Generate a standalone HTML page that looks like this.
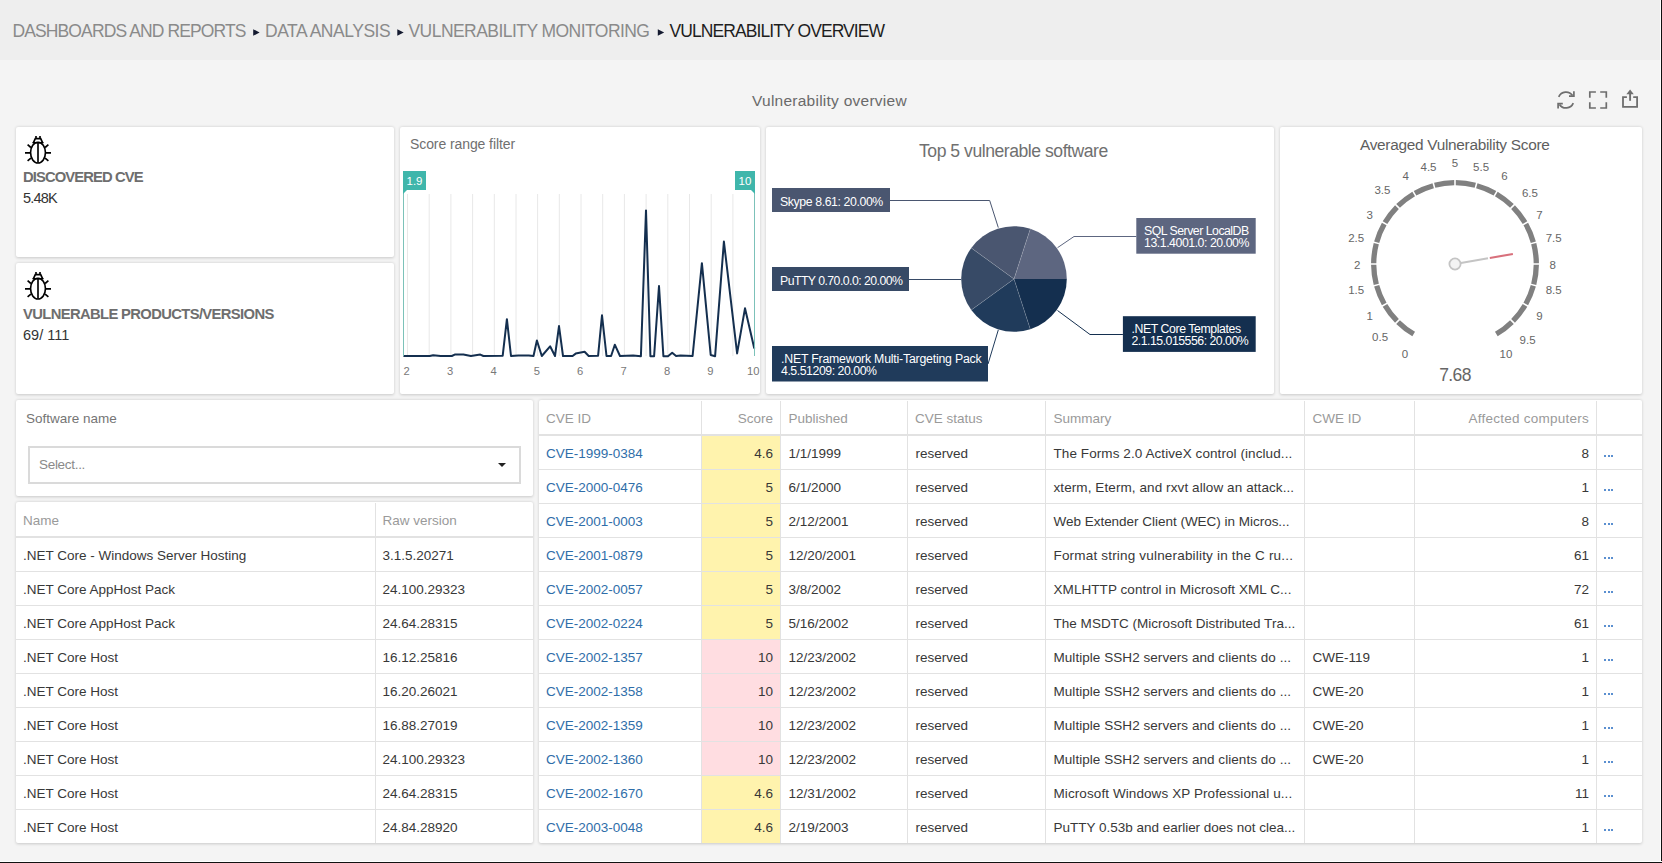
<!DOCTYPE html>
<html><head><meta charset="utf-8">
<style>
*{margin:0;padding:0;box-sizing:border-box}
html,body{width:1662px;height:863px;overflow:hidden}
body{background:#f4f4f4;font-family:"Liberation Sans",sans-serif;color:#333;position:relative}
.abs{position:absolute}
#crumb{left:0;top:0;width:1662px;height:60px;background:#eeeeee}
#crumb .t{position:absolute;top:20px;font-size:17.5px;color:#8a8a8a;white-space:nowrap;line-height:22px}
#crumb .arr{position:absolute;top:30px;width:0;height:0;border-left:5.5px solid #333;border-top:2.8px solid transparent;border-bottom:2.8px solid transparent}
.card{position:absolute;background:#fff;border-radius:2px;box-shadow:0 0.5px 3px rgba(0,0,0,0.18)}
.txt{position:absolute;white-space:nowrap}
#rborder{right:0;top:0;width:2px;height:863px;background:linear-gradient(to right,#fff 0,#fff 1px,#111 1px)}
#bborder{left:0;bottom:0;width:1662px;height:2px;background:linear-gradient(to bottom,#fff 0,#fff 1px,#111 1px)}
.cell{position:absolute;white-space:nowrap;font-size:13.5px;line-height:34px;color:#383838;margin-top:0.7px}
.cell.h{color:#9a9a9a;line-height:35px}
.cell.lk{color:#2f6ea9}
.dots{position:absolute;width:9px;height:2px;background:linear-gradient(to right,#5a8fd0 0,#5a8fd0 2px,transparent 2px,transparent 3.5px,#5a8fd0 3.5px,#5a8fd0 5.5px,transparent 5.5px,transparent 7px,#5a8fd0 7px,#5a8fd0 9px)}
</style></head><body>
<div id="crumb" class="abs">
  <span class="t" style="left:12.5px;letter-spacing:-0.886px">DASHBOARDS AND REPORTS</span>
  <span class="t" style="left:265px;letter-spacing:-0.47px">DATA ANALYSIS</span>
  <span class="t" style="left:408.5px;letter-spacing:-0.55px">VULNERABILITY MONITORING</span>
  <span class="t" style="left:669.5px;color:#1e1e1e;letter-spacing:-0.91px">VULNERABILITY OVERVIEW</span>

  <svg class="abs" style="left:0;top:0" width="900" height="60" viewBox="0 0 900 60"><path d="M253.2 29.2L259.6 32.5L253.2 35.8Z M397.3 29.2L403.7 32.5L397.3 35.8Z M657.8 29.2L664.2 32.5L657.8 35.8Z" fill="#141a30"/></svg>
</div>

<div class="txt" style="left:752px;top:91.5px;font-size:15.5px;color:#6a6a6a;letter-spacing:0.25px;line-height:18px">Vulnerability overview</div>

<!-- cards -->
<div class="card" style="left:16px;top:127px;width:378px;height:130px"></div>
<div class="card" style="left:16px;top:263px;width:378px;height:131px"></div>
<div class="card" style="left:400px;top:127px;width:360px;height:267px"></div>
<div class="card" style="left:766px;top:127px;width:508px;height:267px"></div>
<div class="card" style="left:1280px;top:127px;width:362px;height:267px"></div>
<div class="card" style="left:16px;top:400px;width:517px;height:96px"></div>
<div class="card" style="left:16px;top:502px;width:517px;height:341px"></div>
<div class="card" style="left:539px;top:400px;width:1103px;height:443px"></div>


<!-- card 1 content -->
<svg class="abs" style="left:0;top:0" width="1662" height="863" viewBox="0 0 1662 863">
  <g fill="none" stroke="#000" stroke-width="1.65">
      <ellipse cx="38" cy="152.6" rx="7.45" ry="10.4"/>
      <path d="M38 142.5V162.8"/>
      <path d="M32.6 142.7H43.4" stroke-width="1.5"/>
      <path d="M33.2 143.2L35.3 138.6H40.7L42.8 143.2"/>
      <path d="M36 135.9V139M40 135.9V139"/>
      <path d="M25 152.9H30M46 152.9H51M27.6 144.7L30.9 147.5M48.4 144.7L45.1 147.5M27.6 160.9L30.9 158.1M48.4 160.9L45.1 158.1"/>
    </g>
  <g transform="translate(0 136)" fill="none" stroke="#000" stroke-width="1.65">
      <ellipse cx="38" cy="152.6" rx="7.45" ry="10.4"/>
      <path d="M38 142.5V162.8"/>
      <path d="M32.6 142.7H43.4" stroke-width="1.5"/>
      <path d="M33.2 143.2L35.3 138.6H40.7L42.8 143.2"/>
      <path d="M36 135.9V139M40 135.9V139"/>
      <path d="M25 152.9H30M46 152.9H51M27.6 144.7L30.9 147.5M48.4 144.7L45.1 147.5M27.6 160.9L30.9 158.1M48.4 160.9L45.1 158.1"/>
    </g>
  </svg>
<div class="txt" style="left:23px;top:168.6px;font-size:14.8px;font-weight:bold;color:#6e6e6e;letter-spacing:-0.9px;line-height:16px">DISCOVERED CVE</div>
<div class="txt" style="left:23px;top:189.8px;font-size:14.5px;color:#333;letter-spacing:-0.8px;line-height:16px">5.48K</div>
<div class="txt" style="left:23px;top:305.9px;font-size:14.8px;font-weight:bold;color:#6e6e6e;letter-spacing:-0.65px;line-height:16px">VULNERABLE PRODUCTS/VERSIONS</div>
<div class="txt" style="left:23px;top:327px;font-size:14.5px;color:#333;letter-spacing:0px;line-height:16px">69/ 111</div>

<!-- score range filter -->
<div class="txt" style="left:410px;top:136px;font-size:14px;color:#707070;letter-spacing:-0.09px;line-height:16px">Score range filter</div>
<svg class="abs" style="left:0;top:0" width="1662" height="863" viewBox="0 0 1662 863">
  <path d="M407.5 194V356 M429.2 194V356 M450.9 194V356 M472.6 194V356 M494.3 194V356 M516.0 194V356 M537.6 194V356 M559.3 194V356 M581.0 194V356 M602.7 194V356 M624.4 194V356 M646.1 194V356 M667.8 194V356 M689.5 194V356 M711.2 194V356 M732.9 194V356" stroke="#e8e8e8" stroke-width="1" fill="none"/>
  <polyline points="403.4,356.0 429.7,356.0 433.2,355.2 440.7,356.0 451.8,356.0 454.7,354.6 463.4,354.6 470.9,356.0 480.3,354.6 483.4,356.0 502.7,355.7 506.9,319.2 511.0,356.0 518.3,355.5 528.8,355.5 533.5,356.0 536.9,340.5 541.8,356.0 550.1,346.3 555.0,356.0 559.0,326.1 563.0,356.0 572.6,356.0 575.7,353.6 584.6,351.7 588.7,356.0 598.1,355.7 602.0,315.3 606.5,356.0 611.1,356.0 614.8,344.7 620.0,356.0 633.2,355.5 640.9,356.2 646.0,210.4 650.4,356.2 654.1,356.2 659.0,286.1 663.4,356.2 668.0,356.2 672.2,352.8 676.1,356.0 680.5,355.5 692.6,356.0 701.9,263.2 710.7,355.0 715.1,356.2 723.9,241.6 737.1,353.4 745.0,308.3 754.3,348.4" fill="none" stroke="#142f4f" stroke-width="2" stroke-linejoin="round"/>
  <path d="M403.5 190V356M754.5 190V356" stroke="#7cc2b9" stroke-width="1"/>
  <path d="M403 171h23v19h-19l-4 4z" fill="#3fb6ab"/>
  <path d="M735 171h20v23l-4-4h-16z" fill="#3fb6ab"/>
  <g font-family="Liberation Sans" font-size="11.5" fill="#fff" text-anchor="middle">
    <text x="414.5" y="185">1.9</text>
    <text x="745" y="185">10</text>
  </g>
  <g font-family="Liberation Sans" font-size="11.2" fill="#787878" text-anchor="middle">
    <text x="406.7" y="375">2</text>
    <text x="450.1" y="375">3</text>
    <text x="493.5" y="375">4</text>
    <text x="536.8" y="375">5</text>
    <text x="580.2" y="375">6</text>
    <text x="623.6" y="375">7</text>
    <text x="667.0" y="375">8</text>
    <text x="710.4" y="375">9</text>
    <text x="753.2" y="375">10</text>
  </g>
</svg>

<!-- pie -->
<div class="txt" style="left:919px;top:141px;font-size:17.6px;color:#707070;letter-spacing:-0.47px;line-height:20px">Top 5 vulnerable software</div>
<svg class="abs" style="left:0;top:0" width="1662" height="863" viewBox="0 0 1662 863">
<path d="M1014.0 279.0L1066.80 279.00A52.8 52.8 0 0 1 1030.32 329.22Z" fill="#142f4f"/>
<path d="M1014.0 279.0L1030.32 329.22A52.8 52.8 0 0 1 971.28 310.04Z" fill="#203b5b"/>
<path d="M1014.0 279.0L971.28 310.04A52.8 52.8 0 0 1 971.28 247.96Z" fill="#374a66"/>
<path d="M1014.0 279.0L971.28 247.96A52.8 52.8 0 0 1 1030.32 228.78Z" fill="#4a5670"/>
<path d="M1014.0 279.0L1030.32 228.78A52.8 52.8 0 0 1 1066.80 279.00Z" fill="#5d6680"/>
<path d="M1014.0 279.0L1030.32 329.22M1014.0 279.0L971.28 310.04M1014.0 279.0L971.28 247.96M1014.0 279.0L1030.32 228.78" stroke="rgba(255,255,255,0.2)" stroke-width="0.8"/>
<g fill="none" stroke-width="1">
<path d="M890 200.5H989.7L998.3 227.6" stroke="#4a5670"/>
<path d="M909 279.5H961" stroke="#374a66"/>
<path d="M988 364L998.3 329.9" stroke="#203b5b"/>
<path d="M1136.3 236.5H1074L1057.5 247.7" stroke="#5d6680"/>
<path d="M1122.9 334.5H1090L1057.5 310.5" stroke="#142f4f"/>
</g>
<rect x="772" y="188" width="118" height="24" fill="#4a5670"/>
<rect x="772" y="267" width="137" height="24" fill="#374a66"/>
<rect x="772" y="346" width="216" height="35.5" fill="#203b5b"/>
<rect x="1136.3" y="218" width="119.4" height="35.7" fill="#5d6680"/>
<rect x="1122.9" y="316.2" width="132.8" height="35.7" fill="#142f4f"/>
<g font-family="Liberation Sans" font-size="12.3" fill="#fff">
<text x="780" y="205.5" letter-spacing="-0.4">Skype 8.61: 20.00%</text>
<text x="780" y="284.5" letter-spacing="-0.55">PuTTY 0.70.0.0: 20.00%</text>
<text x="781" y="363.4" letter-spacing="-0.2">.NET Framework Multi-Targeting Pack</text>
<text x="781" y="375" letter-spacing="-0.45">4.5.51209: 20.00%</text>
<text x="1144" y="235" letter-spacing="-0.5">SQL Server LocalDB</text>
<text x="1144" y="247" letter-spacing="-0.45">13.1.4001.0: 20.00%</text>
<text x="1131.5" y="333.2" letter-spacing="-0.42">.NET Core Templates</text>
<text x="1131.5" y="345" letter-spacing="-0.5">2.1.15.015556: 20.00%</text>
</g>
</svg>

<!-- gauge -->
<div class="txt" style="left:1360px;top:135.5px;font-size:15.4px;color:#5e5e5e;letter-spacing:-0.29px;line-height:18px">Averaged Vulnerability Score</div>
<svg class="abs" style="left:0;top:0" width="1662" height="863" viewBox="0 0 1662 863">
<path d="M1413.68 334.01A81.3 81.3 0 0 1 1398.07 322.04M1396.96 320.93A81.3 81.3 0 0 1 1384.99 305.32M1384.21 303.97A81.3 81.3 0 0 1 1376.68 285.79M1376.27 284.29A81.3 81.3 0 0 1 1373.70 264.78M1373.70 263.22A81.3 81.3 0 0 1 1376.27 243.71M1376.68 242.21A81.3 81.3 0 0 1 1384.21 224.03M1384.99 222.68A81.3 81.3 0 0 1 1396.96 207.07M1398.07 205.96A81.3 81.3 0 0 1 1413.68 193.99M1415.03 193.21A81.3 81.3 0 0 1 1433.21 185.68M1434.71 185.27A81.3 81.3 0 0 1 1454.22 182.70M1455.78 182.70A81.3 81.3 0 0 1 1475.29 185.27M1476.79 185.68A81.3 81.3 0 0 1 1494.97 193.21M1496.32 193.99A81.3 81.3 0 0 1 1511.93 205.96M1513.04 207.07A81.3 81.3 0 0 1 1525.01 222.68M1525.79 224.03A81.3 81.3 0 0 1 1533.32 242.21M1533.73 243.71A81.3 81.3 0 0 1 1536.30 263.22M1536.30 264.78A81.3 81.3 0 0 1 1533.73 284.29M1533.32 285.79A81.3 81.3 0 0 1 1525.79 303.97M1525.01 305.32A81.3 81.3 0 0 1 1513.04 320.93M1511.93 322.04A81.3 81.3 0 0 1 1496.32 334.01" fill="none" stroke="#808080" stroke-width="5.3"/>
<g font-family="Liberation Sans" font-size="11.5" fill="#666" text-anchor="middle">
<text x="1405.0" y="357.7">0</text>
<text x="1380.1" y="340.5">0.5</text>
<text x="1369.6" y="320.4">1</text>
<text x="1356.2" y="294.3">1.5</text>
<text x="1357.2" y="268.5">2</text>
<text x="1356.2" y="242.4">2.5</text>
<text x="1369.6" y="219.1">3</text>
<text x="1382.4" y="194.0">3.5</text>
<text x="1405.6" y="180.3">4</text>
<text x="1428.5" y="170.7">4.5</text>
<text x="1455.0" y="166.9">5</text>
<text x="1481.1" y="170.7">5.5</text>
<text x="1504.4" y="179.6">6</text>
<text x="1529.9" y="196.8">6.5</text>
<text x="1539.4" y="219.1">7</text>
<text x="1553.7" y="242.4">7.5</text>
<text x="1552.8" y="268.5">8</text>
<text x="1553.7" y="294.3">8.5</text>
<text x="1539.4" y="320.4">9</text>
<text x="1527.6" y="343.7">9.5</text>
<text x="1506.0" y="357.7">10</text>
</g>
<path d="M1460.9 263L1488 258.2" stroke="#c4c4c4" stroke-width="2" fill="none"/>
<path d="M1489.8 257.9L1512.9 253.9" stroke="#d8707c" stroke-width="2" fill="none"/>
<circle cx="1455" cy="264" r="5.6" fill="#f3f3f3" stroke="#c4c4c4" stroke-width="1.8"/>
<text x="1455" y="380.5" font-family="Liberation Sans" font-size="17.5" fill="#666" text-anchor="middle" letter-spacing="-0.6">7.68</text>
</svg>

<!-- header icons -->
<svg class="abs" style="left:0;top:0" width="1662" height="863" viewBox="0 0 1662 863">
<g fill="none" stroke="#6e6e6e" stroke-width="1.7">
<path d="M1558.73 96.91A7.9 7.9 0 0 1 1572.55 95.58"/>
<path d="M1573.27 103.09A7.9 7.9 0 0 1 1559.45 104.42"/>
<path d="M1569 96.2H1573.9V91.3"/>
<path d="M1562.8 103.6H1558.1V108.4"/>
<path d="M1589.8 97.8V92H1595.9M1600.2 92H1606.3V97.8M1606.3 102.2V108H1600.2M1595.9 108H1589.8V102.2"/>
<path d="M1630.1 93.2V100.8" stroke-width="1.9"/>
<path d="M1626.9 97.1H1623V106.9H1637.1V97.1H1633.2" stroke-width="1.8"/>
</g>
<path d="M1626.4 94.2L1630.1 89.6L1633.8 94.2Z" fill="#6e6e6e"/>
</svg>

<!-- tables -->
<div class="txt" style="left:26px;top:410.7px;font-size:13.5px;color:#757575;line-height:16px">Software name</div>
<div class="abs" style="left:28px;top:446px;width:493px;height:38px;border:2px solid #dadada;background:#fff"></div>
<div class="txt" style="left:39px;top:457px;font-size:13.5px;color:#8a8a8a;letter-spacing:-0.3px;line-height:16px">Select...</div>
<div class="abs" style="left:498px;top:463px;width:0;height:0;border-left:4px solid transparent;border-right:4px solid transparent;border-top:4.5px solid #222"></div>
<div class="abs" style="left:16px;top:502px;width:517px;height:34px"></div>
<div class="abs" style="left:16px;top:536px;width:517px;height:2px;background:#e2e2e2"></div>
<div class="abs" style="left:375px;top:503px;width:1px;height:340px;background:#e2e2e2"></div>
<div class="cell h" style="left:23px;top:502px">Name</div>
<div class="cell h" style="left:382.5px;top:502px">Raw version</div>
<div class="abs" style="left:16px;top:571px;width:517px;height:1px;background:#e2e2e2"></div>
<div class="cell" style="left:23px;top:538px">.NET Core - Windows Server Hosting</div>
<div class="cell" style="left:382.5px;top:538px">3.1.5.20271</div>
<div class="abs" style="left:16px;top:605px;width:517px;height:1px;background:#e2e2e2"></div>
<div class="cell" style="left:23px;top:572px">.NET Core AppHost Pack</div>
<div class="cell" style="left:382.5px;top:572px">24.100.29323</div>
<div class="abs" style="left:16px;top:639px;width:517px;height:1px;background:#e2e2e2"></div>
<div class="cell" style="left:23px;top:606px">.NET Core AppHost Pack</div>
<div class="cell" style="left:382.5px;top:606px">24.64.28315</div>
<div class="abs" style="left:16px;top:673px;width:517px;height:1px;background:#e2e2e2"></div>
<div class="cell" style="left:23px;top:640px">.NET Core Host</div>
<div class="cell" style="left:382.5px;top:640px">16.12.25816</div>
<div class="abs" style="left:16px;top:707px;width:517px;height:1px;background:#e2e2e2"></div>
<div class="cell" style="left:23px;top:674px">.NET Core Host</div>
<div class="cell" style="left:382.5px;top:674px">16.20.26021</div>
<div class="abs" style="left:16px;top:741px;width:517px;height:1px;background:#e2e2e2"></div>
<div class="cell" style="left:23px;top:708px">.NET Core Host</div>
<div class="cell" style="left:382.5px;top:708px">16.88.27019</div>
<div class="abs" style="left:16px;top:775px;width:517px;height:1px;background:#e2e2e2"></div>
<div class="cell" style="left:23px;top:742px">.NET Core Host</div>
<div class="cell" style="left:382.5px;top:742px">24.100.29323</div>
<div class="abs" style="left:16px;top:809px;width:517px;height:1px;background:#e2e2e2"></div>
<div class="cell" style="left:23px;top:776px">.NET Core Host</div>
<div class="cell" style="left:382.5px;top:776px">24.64.28315</div>
<div class="cell" style="left:23px;top:810px">.NET Core Host</div>
<div class="cell" style="left:382.5px;top:810px">24.84.28920</div>
<div class="abs" style="left:539px;top:434px;width:1103px;height:2px;background:#e2e2e2"></div>
<div class="abs" style="left:701px;top:401px;width:1px;height:442px;background:#e2e2e2"></div>
<div class="abs" style="left:780px;top:401px;width:1px;height:442px;background:#e2e2e2"></div>
<div class="abs" style="left:907px;top:401px;width:1px;height:442px;background:#e2e2e2"></div>
<div class="abs" style="left:1045px;top:401px;width:1px;height:442px;background:#e2e2e2"></div>
<div class="abs" style="left:1304px;top:401px;width:1px;height:442px;background:#e2e2e2"></div>
<div class="abs" style="left:1414px;top:401px;width:1px;height:442px;background:#e2e2e2"></div>
<div class="abs" style="left:1596px;top:401px;width:1px;height:442px;background:#e2e2e2"></div>
<div class="cell h" style="left:546.0px;top:400px">CVE ID</div>
<div class="cell h" style="right:889.0px;top:400px">Score</div>
<div class="cell h" style="left:788.5px;top:400px">Published</div>
<div class="cell h" style="left:915.0px;top:400px">CVE status</div>
<div class="cell h" style="left:1053.5px;top:400px">Summary</div>
<div class="cell h" style="left:1312.5px;top:400px">CWE ID</div>
<div class="cell h" style="right:73.0px;top:400px;letter-spacing:0.25px">Affected computers</div>
<div class="abs" style="left:702px;top:436px;width:78px;height:33px;background:#fff3ad"></div>
<div class="abs" style="left:539px;top:469px;width:1103px;height:1px;background:#e2e2e2"></div>
<div class="cell lk" style="left:546px;top:436px">CVE-1999-0384</div>
<div class="cell" style="right:889px;top:436px">4.6</div>
<div class="cell" style="left:788.5px;top:436px">1/1/1999</div>
<div class="cell" style="left:915.5px;top:436px">reserved</div>
<div class="cell" style="left:1053.5px;top:436px;letter-spacing:0.080px">The Forms 2.0 ActiveX control (includ...</div>
<div class="cell" style="right:73px;top:436px">8</div>
<div class="dots" style="left:1604px;top:455px"></div>
<div class="abs" style="left:702px;top:470px;width:78px;height:33px;background:#fff3ad"></div>
<div class="abs" style="left:539px;top:503px;width:1103px;height:1px;background:#e2e2e2"></div>
<div class="cell lk" style="left:546px;top:470px">CVE-2000-0476</div>
<div class="cell" style="right:889px;top:470px">5</div>
<div class="cell" style="left:788.5px;top:470px">6/1/2000</div>
<div class="cell" style="left:915.5px;top:470px">reserved</div>
<div class="cell" style="left:1053.5px;top:470px;letter-spacing:0.088px">xterm, Eterm, and rxvt allow an attack...</div>
<div class="cell" style="right:73px;top:470px">1</div>
<div class="dots" style="left:1604px;top:489px"></div>
<div class="abs" style="left:702px;top:504px;width:78px;height:33px;background:#fff3ad"></div>
<div class="abs" style="left:539px;top:537px;width:1103px;height:1px;background:#e2e2e2"></div>
<div class="cell lk" style="left:546px;top:504px">CVE-2001-0003</div>
<div class="cell" style="right:889px;top:504px">5</div>
<div class="cell" style="left:788.5px;top:504px">2/12/2001</div>
<div class="cell" style="left:915.5px;top:504px">reserved</div>
<div class="cell" style="left:1053.5px;top:504px;letter-spacing:-0.020px">Web Extender Client (WEC) in Micros...</div>
<div class="cell" style="right:73px;top:504px">8</div>
<div class="dots" style="left:1604px;top:523px"></div>
<div class="abs" style="left:702px;top:538px;width:78px;height:33px;background:#fff3ad"></div>
<div class="abs" style="left:539px;top:571px;width:1103px;height:1px;background:#e2e2e2"></div>
<div class="cell lk" style="left:546px;top:538px">CVE-2001-0879</div>
<div class="cell" style="right:889px;top:538px">5</div>
<div class="cell" style="left:788.5px;top:538px">12/20/2001</div>
<div class="cell" style="left:915.5px;top:538px">reserved</div>
<div class="cell" style="left:1053.5px;top:538px;letter-spacing:0.185px">Format string vulnerability in the C ru...</div>
<div class="cell" style="right:73px;top:538px">61</div>
<div class="dots" style="left:1604px;top:557px"></div>
<div class="abs" style="left:702px;top:572px;width:78px;height:33px;background:#fff3ad"></div>
<div class="abs" style="left:539px;top:605px;width:1103px;height:1px;background:#e2e2e2"></div>
<div class="cell lk" style="left:546px;top:572px">CVE-2002-0057</div>
<div class="cell" style="right:889px;top:572px">5</div>
<div class="cell" style="left:788.5px;top:572px">3/8/2002</div>
<div class="cell" style="left:915.5px;top:572px">reserved</div>
<div class="cell" style="left:1053.5px;top:572px;letter-spacing:0.066px">XMLHTTP control in Microsoft XML C...</div>
<div class="cell" style="right:73px;top:572px">72</div>
<div class="dots" style="left:1604px;top:591px"></div>
<div class="abs" style="left:702px;top:606px;width:78px;height:33px;background:#fff3ad"></div>
<div class="abs" style="left:539px;top:639px;width:1103px;height:1px;background:#e2e2e2"></div>
<div class="cell lk" style="left:546px;top:606px">CVE-2002-0224</div>
<div class="cell" style="right:889px;top:606px">5</div>
<div class="cell" style="left:788.5px;top:606px">5/16/2002</div>
<div class="cell" style="left:915.5px;top:606px">reserved</div>
<div class="cell" style="left:1053.5px;top:606px;letter-spacing:0.025px">The MSDTC (Microsoft Distributed Tra...</div>
<div class="cell" style="right:73px;top:606px">61</div>
<div class="dots" style="left:1604px;top:625px"></div>
<div class="abs" style="left:702px;top:640px;width:78px;height:33px;background:#ffdde1"></div>
<div class="abs" style="left:539px;top:673px;width:1103px;height:1px;background:#e2e2e2"></div>
<div class="cell lk" style="left:546px;top:640px">CVE-2002-1357</div>
<div class="cell" style="right:889px;top:640px">10</div>
<div class="cell" style="left:788.5px;top:640px">12/23/2002</div>
<div class="cell" style="left:915.5px;top:640px">reserved</div>
<div class="cell" style="left:1053.5px;top:640px;letter-spacing:0.050px">Multiple SSH2 servers and clients do ...</div>
<div class="cell" style="left:1312.5px;top:640px">CWE-119</div>
<div class="cell" style="right:73px;top:640px">1</div>
<div class="dots" style="left:1604px;top:659px"></div>
<div class="abs" style="left:702px;top:674px;width:78px;height:33px;background:#ffdde1"></div>
<div class="abs" style="left:539px;top:707px;width:1103px;height:1px;background:#e2e2e2"></div>
<div class="cell lk" style="left:546px;top:674px">CVE-2002-1358</div>
<div class="cell" style="right:889px;top:674px">10</div>
<div class="cell" style="left:788.5px;top:674px">12/23/2002</div>
<div class="cell" style="left:915.5px;top:674px">reserved</div>
<div class="cell" style="left:1053.5px;top:674px;letter-spacing:0.050px">Multiple SSH2 servers and clients do ...</div>
<div class="cell" style="left:1312.5px;top:674px">CWE-20</div>
<div class="cell" style="right:73px;top:674px">1</div>
<div class="dots" style="left:1604px;top:693px"></div>
<div class="abs" style="left:702px;top:708px;width:78px;height:33px;background:#ffdde1"></div>
<div class="abs" style="left:539px;top:741px;width:1103px;height:1px;background:#e2e2e2"></div>
<div class="cell lk" style="left:546px;top:708px">CVE-2002-1359</div>
<div class="cell" style="right:889px;top:708px">10</div>
<div class="cell" style="left:788.5px;top:708px">12/23/2002</div>
<div class="cell" style="left:915.5px;top:708px">reserved</div>
<div class="cell" style="left:1053.5px;top:708px;letter-spacing:0.050px">Multiple SSH2 servers and clients do ...</div>
<div class="cell" style="left:1312.5px;top:708px">CWE-20</div>
<div class="cell" style="right:73px;top:708px">1</div>
<div class="dots" style="left:1604px;top:727px"></div>
<div class="abs" style="left:702px;top:742px;width:78px;height:33px;background:#ffdde1"></div>
<div class="abs" style="left:539px;top:775px;width:1103px;height:1px;background:#e2e2e2"></div>
<div class="cell lk" style="left:546px;top:742px">CVE-2002-1360</div>
<div class="cell" style="right:889px;top:742px">10</div>
<div class="cell" style="left:788.5px;top:742px">12/23/2002</div>
<div class="cell" style="left:915.5px;top:742px">reserved</div>
<div class="cell" style="left:1053.5px;top:742px;letter-spacing:0.050px">Multiple SSH2 servers and clients do ...</div>
<div class="cell" style="left:1312.5px;top:742px">CWE-20</div>
<div class="cell" style="right:73px;top:742px">1</div>
<div class="dots" style="left:1604px;top:761px"></div>
<div class="abs" style="left:702px;top:776px;width:78px;height:33px;background:#fff3ad"></div>
<div class="abs" style="left:539px;top:809px;width:1103px;height:1px;background:#e2e2e2"></div>
<div class="cell lk" style="left:546px;top:776px">CVE-2002-1670</div>
<div class="cell" style="right:889px;top:776px">4.6</div>
<div class="cell" style="left:788.5px;top:776px">12/31/2002</div>
<div class="cell" style="left:915.5px;top:776px">reserved</div>
<div class="cell" style="left:1053.5px;top:776px;letter-spacing:0.090px">Microsoft Windows XP Professional u...</div>
<div class="cell" style="right:73px;top:776px">11</div>
<div class="dots" style="left:1604px;top:795px"></div>
<div class="abs" style="left:702px;top:810px;width:78px;height:33px;background:#fff3ad"></div>
<div class="cell lk" style="left:546px;top:810px">CVE-2003-0048</div>
<div class="cell" style="right:889px;top:810px">4.6</div>
<div class="cell" style="left:788.5px;top:810px">2/19/2003</div>
<div class="cell" style="left:915.5px;top:810px">reserved</div>
<div class="cell" style="left:1053.5px;top:810px;letter-spacing:-0.010px">PuTTY 0.53b and earlier does not clea...</div>
<div class="cell" style="right:73px;top:810px">1</div>
<div class="dots" style="left:1604px;top:829px"></div>
<div id="rborder" class="abs"></div>
<div id="bborder" class="abs"></div>
</body></html>
